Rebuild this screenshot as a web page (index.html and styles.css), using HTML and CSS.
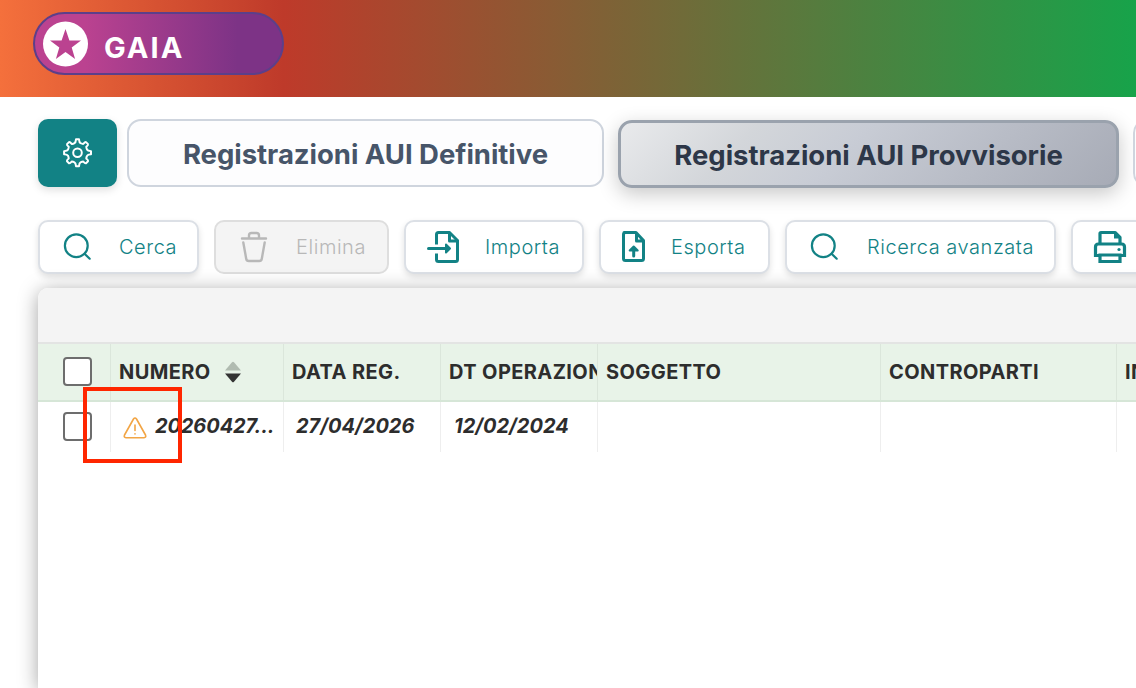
FILE: index.html
```html
<!DOCTYPE html>
<html lang="it">

<head>
    <meta charset="UTF-8">
    <meta name="viewport" content="width=device-width, initial-scale=1.0">
    <title>GAIA - Registrazioni AUI</title>
    <link rel="stylesheet" href="styles.css">
</head>

<body>
    <header class="topbar">
        <div class="logo">
            <svg class="logo-icon" viewBox="0 0 46 46">
                <circle cx="23.5" cy="23" r="22.5" fill="#fff"/>
                <path d="M23.5 8l3.9 11.4h11.6l-9.3 7.1 3.4 11.5-9.6-6.9-9.6 6.9 3.4-11.5-9.3-7.1h11.6z" fill="#bb4290"/>
            </svg>
            <span class="logo-text">GAIA</span>
        </div>
    </header>

    <nav class="tabs">
        <button class="tab-settings">
            <svg width="30" height="30" viewBox="0 0 30 30" fill="none" stroke="#fff" stroke-width="2" stroke-linejoin="round">
                <path d="M13 1.3h3q.3 3.3 1.5 3.9 2 .9 2.8.7 1.8-2.1 2.7-1.8l2 2q.4.9-1.7 2.7 0 1.3.8 2.9.6 1.3 3.9 1.5v3q-3.3.3-3.9 1.5-.9 1.6-.8 2.9 2.1 1.8 1.7 2.7l-2 2q-.9.4-2.7-1.7-1.3 0-2.8.7-1.2.6-1.5 3.9h-3q-.3-3.3-1.5-3.9-1.5-.8-2.8-.7-1.8 2.1-2.7 1.7l-2-2q-.4-.9 1.7-2.7 0-1.3-.7-2.9-.6-1.2-3.9-1.5v-3q3.3-.2 3.9-1.5.7-1.6.7-2.9-2.1-1.8-1.7-2.7l2-2q.9-.4 2.7 1.8 1.3.2 2.8-.7 1.2-.6 1.5-3.9z"/>
                <circle cx="14.5" cy="14.7" r="4.3"/>
            </svg>
        </button>
        <button class="tab tab-definitive"><span>Registrazioni AUI Definitive</span></button>
        <button class="tab tab-provvisorie active"><span>Registrazioni AUI Provvisorie</span></button>
        <button class="tab tab-next"></button>
    </nav>

    <div class="toolbar">
        <button class="tool tool-cerca">
            <svg width="32" height="32" viewBox="0 0 32 32" fill="none" stroke="currentColor" stroke-width="2.2" stroke-linecap="round">
                <circle cx="14.3" cy="14.7" r="11.4"/>
                <path d="M22.5 22.7l5.2 5"/>
            </svg>
            <span>Cerca</span>
        </button>
        <button class="tool tool-elimina" disabled>
            <svg width="32" height="32" viewBox="0 0 32 32" fill="none" stroke="currentColor" stroke-width="2.4" stroke-linecap="round" stroke-linejoin="round">
                <path d="M4 7.5h24M11 7.5V4.5q0-2.500 2.500-2.500h5q2.500 0 2.500 2.500v3M5.300 11.500l2.900 16.200q.4 2.300 2.600 2.300h10.400q2.200 0 2.600-2.300l2.900-16.200"/>
            </svg>
            <span>Elimina</span>
        </button>
        <button class="tool tool-importa">
            <svg width="34" height="34" viewBox="0 0 34 34" fill="none" stroke="currentColor" stroke-width="3" stroke-linecap="round" stroke-linejoin="round">
                <path d="M9.5 14.5V4.5q0-2 2-2h11l8 8v19q0 2-2 2h-17q-2 0-2-2v-6" stroke-linecap="butt"/>
                <path d="M22.5 3v8h8"/>
                <path d="M1.5 18.5h19"/>
                <path d="M19 14.5l4 4-4 4z" fill="currentColor" stroke-width="2"/>
            </svg>
            <span>Importa</span>
        </button>
        <button class="tool tool-esporta">
            <svg width="26" height="34" viewBox="0 0 26 34" fill="none" stroke="currentColor" stroke-width="3" stroke-linejoin="round">
                <path d="M3 2.5h12l7.500 8v18q0 2-2 2h-16q-2 0-2-2v-24q0-2 2-2zM15.500 3v8h7"/>
                <path d="M12.700 26v-7" stroke-linecap="round"/>
                <path d="M8.700 20.500l4-4 4 4z" fill="currentColor" stroke-width="2"/>
            </svg>
            <span>Esporta</span>
        </button>
        <button class="tool tool-ricerca">
            <svg width="32" height="32" viewBox="0 0 32 32" fill="none" stroke="currentColor" stroke-width="2.2" stroke-linecap="round">
                <circle cx="14.3" cy="14.7" r="11.4"/>
                <path d="M22.5 22.7l5.2 5"/>
            </svg>
            <span>Ricerca avanzata</span>
        </button>
        <button class="tool tool-stampa">
            <svg width="34" height="34" viewBox="0 0 34 34" fill="none" stroke="currentColor" stroke-width="3.2">
                <path d="M7 13V3.5q0-1 1-1h14l5 5V13" stroke-linejoin="round"/>
                <path d="M21 2l6.5 6.5H21z" fill="currentColor" stroke="none"/>
                <path d="M7 25.5H2.500V17q0-3 3-3h23q3 0 3 3v8.500H27"/>
                <path d="M7 25h20v6.500H7z"/>
                <circle cx="26" cy="19.500" r="1.600" fill="currentColor" stroke="none"/>
            </svg>
        </button>
    </div>

    <main class="grid-panel">
        <div class="grid-top"></div>
        <div class="grid-row grid-head">
            <div class="cell cell-check"><span class="checkbox"></span></div>
            <div class="cell cell-numero">
                <span>NUMERO</span>
                <svg class="sort" width="16" height="22" viewBox="0 0 16 22">
                    <path d="M0 9.4L7 1.3q1-1 2 0l7 8.1z" fill="#b0bbb0"/>
                    <path d="M0 12.6l7 8.1q1 1 2 0l7-8.1z" fill="#333"/>
                </svg>
            </div>
            <div class="cell cell-data"><span>DATA REG.</span></div>
            <div class="cell cell-operazione"><span>DT OPERAZIONE</span></div>
            <div class="cell cell-soggetto"><span>SOGGETTO</span></div>
            <div class="cell cell-controparti"><span>CONTROPARTI</span></div>
            <div class="cell cell-importo"><span>IN</span></div>
        </div>
        <div class="grid-row grid-body">
            <div class="cell cell-check"><span class="checkbox"></span></div>
            <div class="cell cell-numero">
                <svg class="warning" width="24" height="22" viewBox="0 0 24 22" fill="none" stroke="#f2a545" stroke-width="1.6" stroke-linecap="round" stroke-linejoin="round">
                    <path d="M10.5 2q1.5-2 3 0l9 16q1 2.500-1.500 2.700H3q-2.500-.2-1.500-2.700z"/>
                    <path d="M12 8v5.500M12 16.700v.3"/>
                </svg>
                <span>20260427...</span>
            </div>
            <div class="cell cell-data"><span>27/04/2026</span></div>
            <div class="cell cell-operazione"><span>12/02/2024</span></div>
            <div class="cell cell-soggetto"></div>
            <div class="cell cell-controparti"></div>
            <div class="cell cell-importo"></div>
        </div>
        <div class="highlight"></div>
    </main>
</body>

</html>
```

FILE: styles.css
```css
* {
    box-sizing: border-box;
}

body {
    margin: 0;
    height: 100vh;
    display: flex;
    flex-direction: column;
    overflow: hidden;
    background-color: #fff;
    font-family: Inter, "Liberation Sans", sans-serif;
    color: #2d2d2d;
}

button {
    font-family: inherit;
    padding: 0;
    margin: 0;
    flex-shrink: 0;
    white-space: nowrap;
}

svg {
    display: block;
    flex-shrink: 0;
}

.topbar {
    height: 97px;
    flex-shrink: 0;
    padding: 12px 0 0 33px;
    background: linear-gradient(90deg, #f4703c 0%, #be3a2a 25%, #17a34a 100%);
}

.logo {
    width: 251px;
    height: 63px;
    display: flex;
    align-items: center;
    padding-left: 7px;
    border: 2px solid #5c3f8a;
    border-radius: 32px;
    background: linear-gradient(90deg, #bb4290 0%, #bb4290 20%, #7d3386 82%);
}

.logo-icon {
    width: 46px;
    height: 46px;
}

.logo-text {
    margin: 9px 0 0 16px;
    color: #fff;
    font-size: 29px;
    line-height: 32px;
    font-weight: 700;
    letter-spacing: 2px;
}

.tabs {
    display: flex;
    padding: 22px 0 0 38px;
}

.tab-settings {
    width: 79px;
    height: 68px;
    display: flex;
    align-items: center;
    justify-content: center;
    border: none;
    border-radius: 10px;
    background-color: #128285;
    box-shadow: 0 3px 8px rgba(0, 0, 0, 0.13);
}

.tab {
    height: 68px;
    padding-top: 2px;
    border: 2px solid #cfd5de;
    border-radius: 14px;
    background-color: #fdfdfe;
    color: #475569;
    font-size: 27.5px;
    font-weight: 700;
    letter-spacing: -0.03px;
}

.tab-definitive {
    width: 477px;
    margin-left: 10px;
}

.tab-provvisorie {
    width: 501px;
    margin: 1px 0 0 14px;
}

.tab.active {
    border: 3px solid #9aa2ad;
    background: linear-gradient(135deg, #e9eaec 0%, #d3d6da 25%, #c8ccd5 45%, #a7abb6 100%);
    color: #2d3748;
    box-shadow: 0 6px 20px rgba(0, 0, 0, 0.22);
}

.tab-next {
    width: 300px;
    margin-left: 14px;
}

.toolbar {
    display: flex;
    gap: 15px;
    padding: 32px 0 0 38px;
}

.tool {
    height: 54px;
    display: flex;
    align-items: center;
    border: 2px solid #dce0e6;
    border-radius: 10px;
    background-color: #fff;
    color: #128285;
    font-size: 20px;
    font-weight: 300;
    letter-spacing: 0.55px;
    box-shadow: 0 3px 6px rgba(0, 0, 0, 0.12);
}

.tool:disabled {
    border-color: #dedede;
    background-color: #f4f4f4;
    color: #b8b8b8;
    box-shadow: none;
}

.tool-cerca {
    width: 161px;
    padding-left: 22px;
}

.tool-cerca span {
    margin-left: 25px;
}

.tool-elimina {
    width: 175px;
    padding-left: 22px;
}

.tool-elimina span {
    margin-left: 26px;
}

.tool-importa {
    width: 180px;
    padding-left: 21px;
}

.tool-importa span {
    margin-left: 24px;
}

.tool-esporta {
    width: 171px;
    padding-left: 20px;
}

.tool-esporta span {
    margin-left: 24px;
}

.tool-ricerca {
    width: 271px;
    padding-left: 22px;
}

.tool-ricerca span {
    margin-left: 26px;
}

.tool-stampa {
    width: 180px;
    padding-left: 20px;
}

.grid-panel {
    position: relative;
    flex: 1;
    margin: 14px -40px 0 38px;
    border-radius: 10px 0 0 0;
    background-color: #fff;
    box-shadow: 0 3px 20px rgba(0, 0, 0, 0.36);
}

.grid-top {
    height: 56px;
    border-bottom: 2px solid #e3e4e3;
    border-radius: 10px 0 0 0;
    background-color: #f4f4f4;
}

.grid-row {
    display: flex;
}

.cell {
    display: flex;
    align-items: center;
    flex-shrink: 0;
    overflow: hidden;
    white-space: nowrap;
    padding-left: 8px;
    border-right: 1px solid #eee;
    font-size: 20px;
    font-weight: 700;
}

.grid-head {
    height: 58px;
    border-bottom: 2px solid #d6e6d7;
    background-color: #e8f3e8;
}

.grid-head .cell {
    border-right-color: #dbe6db;
    letter-spacing: 0.4px;
}

.grid-head .cell-check {
    padding-bottom: 1px;
}

.grid-body {
    height: 50px;
}

.grid-body .cell {
    padding-bottom: 2px;
    font-style: italic;
}

.cell-check {
    width: 73px;
    padding-left: 25px;
}

.checkbox {
    width: 29px;
    height: 29px;
    border: 2px solid #6d6d6d;
    border-radius: 4px;
    background-color: #fff;
}

.grid-body .cell-check {
    padding-bottom: 1px;
}

.cell-numero {
    width: 173px;
}

.sort {
    margin-left: 14px;
}

.grid-body .cell-numero {
    padding-left: 12px;
    letter-spacing: -0.1px;
}

.warning {
    margin: 3px 8px 0 0;
}

.cell-data {
    width: 157px;
}

.grid-body .cell-data {
    padding-left: 12px;
}

.cell-operazione {
    width: 157px;
}

.grid-body .cell-operazione {
    padding-left: 13px;
}

.cell-soggetto {
    width: 283px;
}

.cell-controparti {
    width: 236px;
}

.cell-importo {
    flex: 1;
    border-right: none;
}

/* riquadro rosso sopra l'icona di avviso */
.highlight {
    position: absolute;
    left: 45px;
    top: 99px;
    width: 99px;
    height: 76px;
    border: 4px solid #ff2600;
}
```
